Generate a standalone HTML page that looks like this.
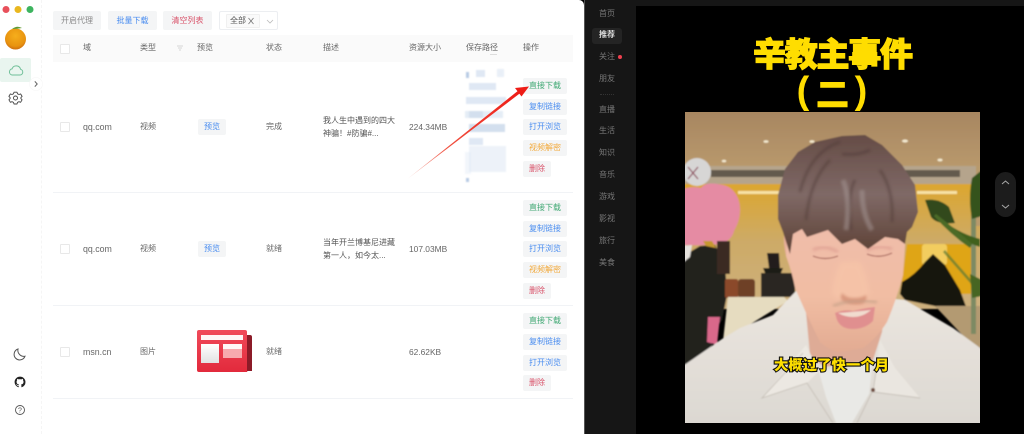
<!DOCTYPE html>
<html lang="zh">
<head>
<meta charset="utf-8">
<title>资源下载</title>
<style>
html,body{margin:0;padding:0;width:1024px;height:434px;overflow:hidden;background:#000}
body{position:relative;font-family:"Liberation Sans","Noto Sans CJK SC",sans-serif;font-size:8px;color:#666}
#app{position:absolute;left:0;top:0;width:584px;height:434px;background:#fff;border-top-right-radius:5px}
.t{position:absolute;line-height:16px;height:16px;white-space:nowrap}
.b{position:absolute;height:16px;line-height:16px;background:#f4f5f6;border-radius:2px;text-align:center;width:44px}
.g{color:#3fa873}.l{color:#4a8df0}.o{color:#f2a93b}.r{color:#d9536a;width:28px}
.tb{position:absolute;top:11px;height:19px;line-height:19px;text-align:center;border-radius:2px;background:#f4f5f6}
.c{position:absolute;left:60px;width:8px;height:8px;border:1px solid #e8e8e8;border-radius:1px;background:#fff}
.h{position:absolute;left:53px;width:520px;height:1px;background:#f1f3f6}
.n{position:absolute;left:599px;line-height:16px;color:#777;white-space:nowrap}
.p{position:absolute;background:#dfe8f4}
#blur{position:absolute;left:0;top:0;width:584px;height:434px;filter:blur(.8px)}
</style>
</head>
<body>
<div id="app"></div>

<!-- left rail -->
<div style="position:absolute;left:41px;top:0;width:0;height:434px;border-left:1px dashed #f5f5f5"></div>
<svg style="position:absolute;left:0;top:0" width="48" height="434" viewBox="0 0 48 434">
  <circle cx="6" cy="9.500" r="3.500" fill="#e8505b"/>
  <circle cx="18" cy="9.500" r="3.500" fill="#e9b71f"/>
  <circle cx="30" cy="9.500" r="3.500" fill="#3db45f"/>
  <defs><radialGradient id="or" cx=".5" cy=".35" r=".7"><stop offset="0" stop-color="#f6ae1c"/><stop offset=".7" stop-color="#e8930f"/><stop offset="1" stop-color="#c7640f"/></radialGradient></defs>
  <circle cx="15.500" cy="39" r="10.500" fill="url(#or)"/>
  <path d="M12 29q5-4 10-1-5 1-10 1z" fill="#5f9b35"/>
  <rect x="0" y="58" width="31" height="24" rx="2" fill="#e9f5ef"/>
  <path d="M12 75h8a2.900 2.900 0 0 0 .6-5.700 4.500 4.500 0 0 0-8.600-.4A3.100 3.100 0 0 0 12 75z" fill="none" stroke="#6fbf98" stroke-width="1"/>
  <circle cx="36" cy="84" r="6.500" fill="#fff" stroke="#f6f6f6" stroke-width=".6"/>
  <path d="M34.800 81.400l2.400 2.600-2.400 2.600" fill="none" stroke="#666" stroke-width="1"/>
  <circle cx="15.500" cy="98" r="2" fill="none" stroke="#444" stroke-width=".9"/>
  <path d="M14 92.200h3l.5 1.600 1.500.7 1.600-.6 1.500 2.500-1.200 1.200v1l1.200 1.200-1.500 2.500-1.600-.6-1.500.7-.5 1.600h-3l-.5-1.600-1.500-.7-1.600.6-1.500-2.500 1.200-1.200v-1l-1.200-1.200 1.500-2.500 1.600.6 1.500-.7z" fill="none" stroke="#444" stroke-width=".9" stroke-linejoin="round"/>
  <path d="M18 349a5.600 5.600 0 1 0 7 7.200 6 6 0 0 1-7-7.200z" fill="none" stroke="#555" stroke-width="1"/>
  <path transform="translate(14.600,376.600) scale(.68)" d="M8 0C3.580 0 0 3.580 0 8c0 3.540 2.290 6.530 5.470 7.590.4.070.55-.17.55-.38 0-.19-.01-.82-.01-1.490-2.010.37-2.530-.49-2.690-.94-.09-.23-.48-.94-.82-1.130-.28-.15-.68-.52-.01-.53.63-.01 1.080.58 1.230.82.72 1.210 1.870.87 2.330.66.070-.52.28-.87.51-1.070-1.780-.2-3.640-.89-3.640-3.950 0-.87.31-1.590.82-2.150-.08-.2-.36-1.020.08-2.120 0 0 .67-.21 2.200.82.64-.18 1.320-.27 2-.27.68 0 1.360.09 2 .27 1.530-1.040 2.200-.82 2.200-.82.44 1.100.16 1.920.08 2.120.51.56.82 1.270.82 2.150 0 3.070-1.870 3.750-3.650 3.950.29.25.54.73.54 1.480 0 1.070-.01 1.930-.01 2.200 0 .21.15.46.55.38A8.013 8.013 0 0016 8c0-4.420-3.580-8-8-8z" fill="#222"/>
  <circle cx="20" cy="410" r="4.500" fill="none" stroke="#555" stroke-width=".9"/>
  <text x="20" y="412.700" font-size="7" text-anchor="middle" fill="#555" font-family="Liberation Sans">?</text>
</svg>

<!-- toolbar -->
<div class="tb" style="left:53px;width:48px;color:#888">开启代理</div>
<div class="tb" style="left:108px;width:49px;color:#4a8df0">批量下载</div>
<div class="tb" style="left:163px;width:49px;color:#d9536a">清空列表</div>
<div style="position:absolute;left:219px;top:11px;width:59px;height:19px;border:1px solid #eceef1;box-sizing:border-box;border-radius:2px"></div>
<div style="position:absolute;left:226px;top:14px;width:34px;height:14px;border:1px solid #f0f0f0;box-sizing:border-box;background:#fafafa;border-radius:1px"></div>
<div class="t" style="left:230px;top:13px;color:#555">全部</div>
<svg style="position:absolute;left:247px;top:17px" width="32" height="10"><path d="M1.500 1l5 6M6.500 1l-5 6" stroke="#777" stroke-width=".8"/><path d="M20 3l3 3 3-3" fill="none" stroke="#bbb" stroke-width=".8"/></svg>

<!-- table header -->
<div style="position:absolute;left:53px;top:35px;width:520px;height:27px;background:#fafafa"></div>
<div class="c" style="top:44px"></div>
<div class="t" style="left:83px;top:40px">域</div>
<div class="t" style="left:140px;top:40px">类型</div>
<svg style="position:absolute;left:176px;top:45px" width="8" height="7"><path d="M1 1h6M2 3h4M3 5h2" stroke="#ccc" stroke-width=".8"/></svg>
<div class="t" style="left:197px;top:40px">预览</div>
<div class="t" style="left:266px;top:40px">状态</div>
<div class="t" style="left:323px;top:40px">描述</div>
<div class="t" style="left:409px;top:40px">资源大小</div>
<div class="t" style="left:466px;top:40px">保存路径</div>
<div style="position:absolute;left:490px;top:54px;width:7px;height:1px;background:#ddd"></div>
<div class="t" style="left:523px;top:40px">操作</div>

<!-- row lines -->
<div class="h" style="top:192px"></div>
<div class="h" style="top:305px"></div>
<div class="h" style="top:398px"></div>

<!-- row 1 -->
<div class="c" style="top:122px"></div>
<div class="t" style="left:83px;top:119px;font-size:8.800px">qq.com</div>
<div class="t" style="left:140px;top:119px">视频</div>
<div class="b l" style="left:198px;top:119px;width:28px">预览</div>
<div class="t" style="left:266px;top:119px">完成</div>
<div class="t" style="left:323px;top:113px;color:#555">我人生中遇到的四大</div>
<div class="t" style="left:323px;top:126px;color:#555">神骗！#防骗#...</div>
<div class="t" style="left:409px;top:119px;font-size:8.400px">224.34MB</div>

<!-- blurred path -->
<div id="blur">
<div class="p" style="left:476px;top:70px;width:9px;height:7px"></div>
<div class="p" style="left:497px;top:69px;width:7px;height:8px;opacity:.7"></div>
<div class="p" style="left:466px;top:72px;width:3px;height:6px;background:#b8cbe4"></div>
<div class="p" style="left:469px;top:83px;width:27px;height:7px"></div>
<div class="p" style="left:466px;top:97px;width:40px;height:7px"></div>
<div class="p" style="left:465px;top:111px;width:38px;height:7px;opacity:.8"></div>
<div class="p" style="left:469px;top:111px;width:14px;height:7px;background:#d3dfee"></div>
<div class="p" style="left:469px;top:124px;width:36px;height:8px;background:#d3dfee"></div>
<div class="p" style="left:469px;top:138px;width:14px;height:7px"></div>
<div class="p" style="left:469px;top:146px;width:37px;height:26px;opacity:.55"></div>
<div class="p" style="left:465px;top:152px;width:6px;height:22px;opacity:.4"></div>
<div class="p" style="left:466px;top:178px;width:3px;height:4px;background:#b8cbe4"></div>
</div>

<div class="b g" style="left:523px;top:78px">直接下载</div>
<div class="b l" style="left:523px;top:99px">复制链接</div>
<div class="b l" style="left:523px;top:119px">打开浏览</div>
<div class="b o" style="left:523px;top:140px">视频解密</div>
<div class="b r" style="left:523px;top:161px">删除</div>

<!-- row 2 -->
<div class="c" style="top:244px"></div>
<div class="t" style="left:83px;top:241px;font-size:8.800px">qq.com</div>
<div class="t" style="left:140px;top:241px">视频</div>
<div class="b l" style="left:198px;top:241px;width:28px">预览</div>
<div class="t" style="left:266px;top:241px">就绪</div>
<div class="t" style="left:323px;top:235px;color:#555">当年开兰博基尼进藏</div>
<div class="t" style="left:323px;top:248px;color:#555">第一人，如今太...</div>
<div class="t" style="left:409px;top:241px;font-size:8.400px">107.03MB</div>
<div class="b g" style="left:523px;top:200px">直接下载</div>
<div class="b l" style="left:523px;top:221px">复制链接</div>
<div class="b l" style="left:523px;top:241px">打开浏览</div>
<div class="b o" style="left:523px;top:262px">视频解密</div>
<div class="b r" style="left:523px;top:283px">删除</div>

<!-- row 3 -->
<div class="c" style="top:347px"></div>
<div class="t" style="left:83px;top:344px;font-size:8.800px">msn.cn</div>
<div class="t" style="left:140px;top:344px">图片</div>
<svg style="position:absolute;left:196px;top:329px" width="57" height="44" viewBox="0 0 57 44">
  <defs><linearGradient id="msn" x1="0" y1="0" x2="0" y2="1"><stop offset="0" stop-color="#f04a5a"/><stop offset="1" stop-color="#e22a3c"/></linearGradient>
  <linearGradient id="msw" x1="0" y1="0" x2="0" y2="1"><stop offset="0" stop-color="#fff"/><stop offset="1" stop-color="#e2e2e2"/></linearGradient></defs>
  <path d="M50 6h4a2 2 0 0 1 2 2v34H50z" fill="#8c1b28"/>
  <path d="M3 1h46a2 2 0 0 1 2 2v39a1 1 0 0 0 1 1H3a2 2 0 0 1-2-2V3a2 2 0 0 1 2-2z" fill="url(#msn)"/>
  <rect x="5" y="6" width="42" height="5" fill="#fff" opacity=".95"/>
  <rect x="5" y="15" width="18" height="19" fill="url(#msw)"/>
  <rect x="27" y="15" width="19" height="14" fill="#f7a9ae"/>
  <rect x="27" y="15" width="19" height="5" fill="#fff" opacity=".9"/>
</svg>
<div class="t" style="left:266px;top:344px">就绪</div>
<div class="t" style="left:409px;top:344px;font-size:8.400px">62.62KB</div>
<div class="b g" style="left:523px;top:313px">直接下载</div>
<div class="b l" style="left:523px;top:334px">复制链接</div>
<div class="b l" style="left:523px;top:355px">打开浏览</div>
<div class="b r" style="left:523px;top:375px">删除</div>

<!-- red arrow -->
<svg style="position:absolute;left:400px;top:75px" width="140" height="110" viewBox="400 75 140 110">
  <defs><linearGradient id="ar" gradientUnits="userSpaceOnUse" x1="408" y1="178" x2="520" y2="92"><stop offset="0" stop-color="#f5c0b8"/><stop offset=".35" stop-color="#f0503f"/><stop offset="1" stop-color="#ee1c16"/></linearGradient></defs>
  <path d="M408 178.500L519 90l1.800 2.600z" fill="url(#ar)"/>
  <path d="M529 86.500l-14 1.500 6.500 8.500z" fill="#ee1c16"/>
</svg>

<!-- dark side nav -->
<div style="position:absolute;left:584px;top:0;width:52px;height:434px;background:#161616;border-left:1px solid #555;box-sizing:border-box"></div>
<div style="position:absolute;left:636px;top:0;width:388px;height:6px;background:#161616"></div>
<div style="position:absolute;left:592px;top:28px;width:30px;height:16px;background:#242424;border-radius:3px"></div>
<div class="n" style="top:6px">首页</div>
<div class="n" style="top:27px;color:#ddd;font-weight:700">推荐</div>
<div class="n" style="top:49px">关注</div>
<div style="position:absolute;left:618px;top:55px;width:4px;height:4px;border-radius:50%;background:#f0404f"></div>
<div class="n" style="top:71px">朋友</div>
<div style="position:absolute;left:600px;top:94px;width:14px;height:0;border-top:1px dotted #333"></div>
<div class="n" style="top:102px">直播</div>
<div class="n" style="top:123px">生活</div>
<div class="n" style="top:145px">知识</div>
<div class="n" style="top:167px">音乐</div>
<div class="n" style="top:189px">游戏</div>
<div class="n" style="top:211px">影视</div>
<div class="n" style="top:233px">旅行</div>
<div class="n" style="top:255px">美食</div>

<!-- video -->
<svg style="position:absolute;left:636px;top:6px" width="388" height="428" viewBox="636 6 388 428">
  <defs>
    <linearGradient id="ceil" x1="0" y1="0" x2="0" y2="1"><stop offset="0" stop-color="#a68560"/><stop offset="1" stop-color="#b8986c"/></linearGradient>
    <linearGradient id="wall" x1="0" y1="0" x2="0" y2="1"><stop offset="0" stop-color="#dca62e"/><stop offset=".45" stop-color="#cdaa66"/><stop offset="1" stop-color="#cdb07e"/></linearGradient>
    <linearGradient id="hair" x1="0" y1="0" x2="0" y2="1"><stop offset="0" stop-color="#654c46"/><stop offset=".5" stop-color="#7f6966"/><stop offset="1" stop-color="#5c4034"/></linearGradient>
    <linearGradient id="skin" x1="0" y1="0" x2="0" y2="1"><stop offset="0" stop-color="#efbcab"/><stop offset=".6" stop-color="#f1bda3"/><stop offset="1" stop-color="#e2ab92"/></linearGradient>
    <linearGradient id="shirt" x1="0" y1="0" x2="0" y2="1"><stop offset="0" stop-color="#ebe6df"/><stop offset="1" stop-color="#dbd7d1"/></linearGradient>
    <clipPath id="ph"><rect x="685" y="112" width="295" height="311"/></clipPath>
    <filter id="soft" x="-2%" y="-2%" width="104%" height="104%"><feGaussianBlur stdDeviation=".7"/></filter>
    <filter id="bl" x="-10%" y="-10%" width="120%" height="120%"><feGaussianBlur stdDeviation="1.200"/></filter>
    <filter id="bl3" x="-20%" y="-20%" width="140%" height="140%"><feGaussianBlur stdDeviation="3"/></filter>
  </defs>
  <g clip-path="url(#ph)"><g filter="url(#soft)">
    <rect x="680" y="184" width="305" height="125" fill="url(#wall)"/>
    <rect x="680" y="108" width="305" height="58" fill="url(#ceil)"/>
    <!-- lights -->
    <g fill="#f4ead0"><ellipse cx="766" cy="141.500" rx="2.500" ry="1.300"/><ellipse cx="812" cy="141.500" rx="2.500" ry="1.300"/><ellipse cx="905" cy="141" rx="3" ry="1.500"/><ellipse cx="724" cy="161" rx="2.200" ry="1.300"/><ellipse cx="940" cy="160" rx="2.500" ry="1.400"/></g>
    <!-- soffit -->
    <rect x="680" y="166" width="296" height="18" fill="#b5a48c"/>
    <rect x="976" y="166" width="8" height="60" fill="#b89a6c"/>
    <rect x="711" y="170" width="80" height="7" fill="#645a4e"/>
    <rect x="905" y="170" width="55" height="7" fill="#645a4e"/>
    <rect x="738" y="191" width="46" height="3" fill="#f7e2a6"/>
    <rect x="917" y="191" width="40" height="3" fill="#f7e2a6"/>
    <!-- right yellow area + plant -->
    <path d="M907 244h65v50H900z" fill="#dfa518"/>
    <rect x="922" y="244" width="25" height="21" rx="3" fill="#f2cd5e"/>
    <path d="M900 294l2-12q13-7 23-20l8-8 12 11 15 25 8 22-15 13-18-19-30-6z" fill="#16120f"/>
    <path d="M935 306h50v45l-19-12z" fill="#b39a72"/>
    <path d="M971 214h5v120h-5z" fill="#7d8a63"/>
    <path d="M925 200q14-2 24 7l6 16q-18 2-24-6z" fill="#31481c"/>
    <path d="M945 222q16 12 35 17v8q-20-6-35-24z" fill="#41601f"/>
    <path d="M972 178l10-8v46l-10 3q-4-20 0-41z" fill="#35521c"/>
    <path d="M936 214q18 14 36 30l-2 4q-20-14-36-32z" fill="#4b6a25"/>
    <path d="M945 250l28 32-2 2-28-32z" fill="#5b7a35" opacity=".7"/>
    <path d="M970 274l12 6v16l-10 2z" fill="#476524"/>
    <!-- KAWS figure -->
    <path d="M680 190c11-4 17-3 21-2 4-6 14-5 22-3 10 2 17 12 17 24 0 12-4 18-6 22-2 10-14 15-24 13-8 2-18 1-30 1z" fill="#e58ba3"/>
    <circle cx="697" cy="172" r="14" fill="#d7d6d5"/>
    <path d="M688 167l10 12M698 167l-10 12" stroke="#8e4a5c" stroke-width="1.200"/>
    <path d="M680 258l20-12 15-1 10 20 2 30-5 25-12 18 2 7-17 20-15 8z" fill="#24221f"/>
    <path d="M680 246l12-1-2 12-10 8z" fill="#e5e2dd"/>
    <path d="M703 241l9 0 4 7-10-2z" fill="#c6982e"/>
    <rect x="717" y="241" width="13" height="33" fill="#3a2c22"/>
    <path d="M708 317h12l-3 28-10-3z" fill="#d9688a"/>
    <!-- drums / table -->
    <rect x="725" y="279" width="13" height="19" rx="2" fill="#8b4a2c"/>
    <rect x="738" y="279" width="17" height="19" rx="3" fill="#6e3f28"/>
    <path d="M761 273h34v24h-34z" fill="#2a2623"/>
    <path d="M763 268h20l-2 5h-16z" fill="#1d1a18"/>
    <path d="M767 253l12 0 1 15h-11z" fill="#221f1c"/>
    <!-- sofa -->
    <path d="M728 297h56l4 4-65 40z" fill="#e6dcc0"/>
    <!-- shirt -->
    <path d="M680 368l42-29 18-11 33-13 24-25 108 10 48 28 30 22v82H680z" fill="url(#shirt)"/>
    <!-- neck -->
    <path d="M806 312l4 43 14 12 49-7 9-28 2-20z" fill="#deab96"/>
    <!-- tee -->
    <path d="M818 368q28 6 55-8l-4 34-17 29h-16l-10-26z" fill="#e9e9e6"/>
    <!-- collars -->
    <path d="M806 345l-44 53 45-15 12-12z" fill="#ece8e2"/>
    <path d="M880 340l-7 52 47 6-25-30z" fill="#eae6e0"/>
    <path d="M803 353l-41 45 45-15 26 40M878 358l-5 34 47 6M873 390l-16 33" fill="none" stroke="#c6c0b8" stroke-width=".9"/>
    <circle cx="873" cy="390" r="2" fill="#6e4b3c"/>
    <!-- ears -->
    <path d="M784 235q-1 20 8 33l4-30z" fill="#e6ad9a"/>
    <!-- face -->
    <path d="M787 232l-1 24q6 16 9 32l12 27 13 27q10 9 20 10l23-4q14-10 24-26 10-24 16-47l3-43-60-20z" fill="url(#skin)"/>
    <path d="M840 262q-8 20-8 32 8 8 20 8 12 0 18-7-2-18-10-34z" fill="#f6c4a8" opacity=".85" filter="url(#bl3)"/>
    <path d="M842 293q-3 6 2 9 8 4 18 2 6-3 4-9-4 3-12 3-8 0-12-5z" fill="#d9987e" filter="url(#bl)"/>
    <path d="M813 256q12 5 25 0M867 254q12 5 25-1" fill="none" stroke="#a8695e" stroke-width="1.200"/>
    <path d="M813 250q12-6 25 2M867 250q13-6 25-1" fill="none" stroke="#e2a697" stroke-width="3" filter="url(#bl)"/>
    <path d="M833 306q20-8 44-4" fill="none" stroke="#c4a088" stroke-width="3" opacity=".7" filter="url(#bl)"/>
    <path d="M835 313q10-4 18-2 12-3 22-4l-2 14q-8 8-20 8-12 0-16-9z" fill="#e08f8f"/>
    <path d="M838 313q14-1 33-3-8 7-18 7-8 0-15-4z" fill="#f1dccf"/>
    <!-- hair -->
    <path d="M815 142L842 136 865 135 882 145 902 165 915 185 918 212 912 227 907 232 905 244 898 239 885 237 868 249 855 239 842 244 828 230 807 237 802 229 793 234 790 254 783 232 778 219 778 195 785 169 798 152Z" fill="url(#hair)"/>
    <path d="M830 160q-20 20-24 60M855 180q-8 14-4 50M880 170q14 20 12 52M840 142q-30 10-40 50M870 150q-12 6-28 4" fill="none" stroke="#4a3630" stroke-width="2.500" opacity=".5" filter="url(#bl)"/>
    <path d="M843 180q8 20 3 50M862 190q0 24 10 40" fill="none" stroke="#a89a98" stroke-width="5" opacity=".5" filter="url(#bl)"/>
  </g></g>
  <!-- title -->
  <g font-family="'Noto Sans CJK SC','Liberation Sans',sans-serif" font-weight="900" fill="#ffdd00" stroke="#ffdd00" text-anchor="middle">
    <text x="833" y="66" font-size="33" stroke-width="1.100" textLength="160" lengthAdjust="spacing">辛教主事件</text>
    <text x="832.500" y="106" font-size="33" stroke-width=".5">二</text>
    <text x="803" y="103" font-size="38" stroke-width="0" font-family="'Liberation Sans',sans-serif" font-weight="700">(</text>
    <text x="861" y="103" font-size="38" stroke-width="0" font-family="'Liberation Sans',sans-serif" font-weight="700">)</text>
  </g>
  <!-- subtitle -->
  <text x="831.500" y="370" font-family="'Noto Sans CJK SC','Liberation Sans',sans-serif" font-weight="900" font-size="14.400" text-anchor="middle" fill="#ffe000" stroke="#111" stroke-width="2.200" paint-order="stroke" textLength="115" lengthAdjust="spacing">大概过了快一个月</text>
  <!-- scroll pill -->
  <rect x="995" y="172" width="21" height="45" rx="10.500" fill="#1c1c1c"/>
  <path d="M1002 184l3.500-3 3.500 3M1002 205l3.500 3 3.500-3" fill="none" stroke="#aaa" stroke-width="1"/>
</svg>
</body>
</html>
